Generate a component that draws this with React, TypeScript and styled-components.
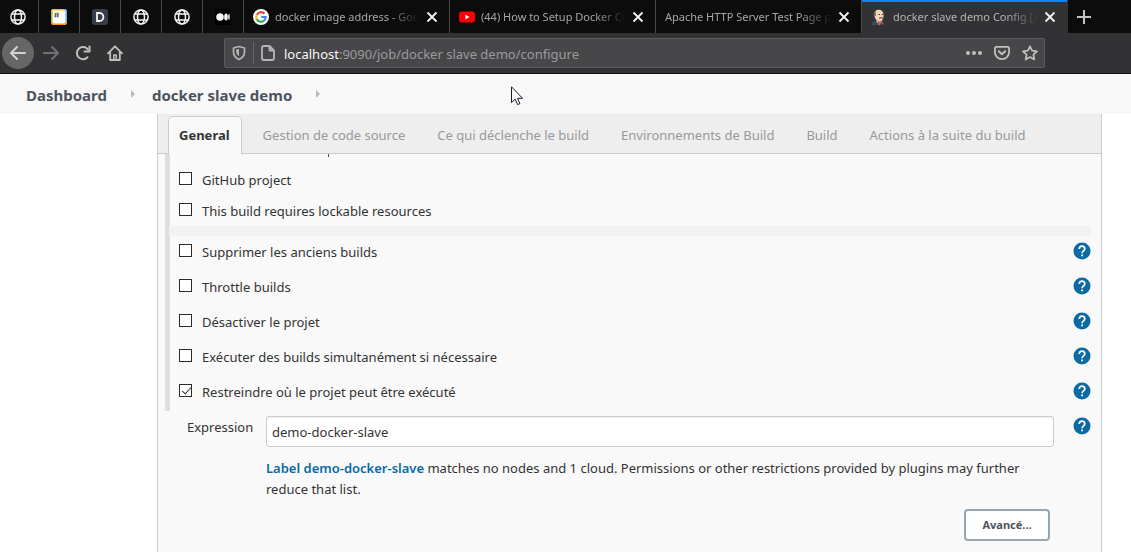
import React from "react";
import styled, { createGlobalStyle, css } from "styled-components";

const GlobalStyle = createGlobalStyle`
  *, *::before, *::after { box-sizing: border-box; }
  body { margin: 0; background: #fff; color: #333; font: 13px/20px "Noto Sans", sans-serif; }
  button, input { font: inherit; color: inherit; }
  button { padding: 0; border: 0; background: none; }
  a { text-decoration: none; }
`;

const Page = styled.div`
  display: flex;
  flex-direction: column;
  min-height: 100vh;
`;

/* ---------- browser chrome ---------- */

const TabStrip = styled.div`
  display: flex;
  flex: none;
  height: 33px;
  margin-left: -2px;
  background: #0c0c0d;
`;

const tabBase = css`
  display: flex;
  align-items: center;
  border-right: 1px solid #4a4a4b;
`;

const PinnedTab = styled.button`
  ${tabBase}
  flex: none;
  justify-content: center;
  width: 41px;
`;

const BrowserTab = styled.div<{ $active?: boolean }>`
  ${tabBase}
  flex: 0 1 206px;
  min-width: 0;
  gap: 6px;
  padding: 0 11px 0 9px;
  ${(p) =>
    p.$active &&
    css`
      border-right-color: #323234;
      background: #323234;
      box-shadow: inset 0 2px #0a84ff;
    `}
`;

const TabTitle = styled.span<{ $active?: boolean }>`
  flex: 1;
  min-width: 0;
  overflow: hidden;
  white-space: nowrap;
  font-size: 11px;
  color: ${(p) => (p.$active ? "#b4b4b6" : "#a6a6a7")};
  mask-image: linear-gradient(to left, transparent, #000 32px);
`;

const TabClose = styled.button`
  display: flex;
  flex: none;
  color: #f4f4f5;
`;

const NewTab = styled.button`
  display: flex;
  align-items: center;
  padding: 0 8px;
  color: #c4c4c5;
`;

const Toolbar = styled.div`
  display: flex;
  flex: none;
  align-items: center;
  gap: 16px;
  height: 41px;
  padding: 0 86px 1px 2px;
  background: #323234;
  border-bottom: 1px solid #0c0c0d;
`;

const NavButton = styled.button<{ $dim?: boolean }>`
  display: flex;
  flex: none;
  color: ${(p) => (p.$dim ? "#707072" : "#c0c0c1")};
`;

const BackButton = styled(NavButton)`
  align-items: center;
  justify-content: center;
  width: 32px;
  height: 32px;
  margin-right: -7px;
  border-radius: 50%;
  background: #666667;
  color: #d4d4d5;
`;

const NavButtons = styled.div`
  display: flex;
  flex: none;
  align-items: center;
  gap: 16px;
  width: 206px;
`;

const AddressBar = styled.div`
  display: flex;
  flex: 1;
  align-items: center;
  min-width: 0;
  height: 30px;
  padding: 0 6px 0 7px;
  border: 1px solid #5b5b5d;
  border-radius: 2px;
  background: #474749;
  color: #b4b4b6;
`;

const Divider = styled.span`
  width: 1px;
  height: 22px;
  margin: 0 7px;
  background: #66666a;
`;

const Url = styled.span`
  flex: 1;
  min-width: 0;
  margin: 2px 0 0 9px;
  overflow: hidden;
  white-space: nowrap;
  color: #9b9b9d;
`;

const Host = styled.span`
  color: #f9f9fa;
`;

const AddressActions = styled.div`
  display: flex;
  gap: 12px;
`;

/* ---------- page ---------- */

const Breadcrumbs = styled.nav`
  display: flex;
  flex: none;
  align-items: center;
  height: 40px;
  padding: 2px 26px 0;
  background: #f8f8f8;
`;

const Crumb = styled.a`
  color: #4d545d;
  font-size: 15px;
  font-weight: 700;
`;

const CrumbArrow = styled.span`
  width: 0;
  height: 0;
  margin: 0 17px 3px 24px;
  border: 4px solid transparent;
  border-right: 0;
  border-left-color: #b8b8b8;
`;

const Panel = styled.main`
  flex: 1;
  margin: 0 29px 0 157px;
  border: solid #ccc;
  border-width: 0 1px;
  background: #f9f9f9;
`;

const ConfigTabs = styled.div`
  display: flex;
  align-items: flex-end;
  gap: 32px;
  height: 40px;
  padding-left: 10px;
  border-bottom: 1px solid #ccc;
  background: #eee;
`;

const ConfigTab = styled.button<{ $active?: boolean }>`
  height: 37px;
  white-space: nowrap;
  color: #999;
  ${(p) =>
    p.$active &&
    css`
      height: 38px;
      margin: 0 -11px -1px 0;
      padding: 0 11px 2px 10px;
      border: 1px solid #ccc;
      border-bottom: 0;
      border-radius: 5px 5px 0 0;
      background: #f9f9f9;
      color: #333;
      font-weight: 700;
    `}
`;

const Options = styled.div`
  margin-left: 7px;
  border-left: 5px solid #dfdfdf;
`;

const ScrolledEdge = styled.div`
  height: 10px;
  padding-left: 158px;

  &::before {
    content: "";
    display: block;
    width: 1px;
    height: 3px;
    background: #6b3a66;
  }
`;

const OptionRow = styled.div<{ $compact?: boolean }>`
  display: flex;
  align-items: flex-start;
  justify-content: space-between;
  height: ${(p) => (p.$compact ? 31 : 35)}px;
  padding: 6px 10px 0 9px;
`;

const OptionLabel = styled.label`
  display: flex;
  gap: 10px;
`;

const Checkbox = styled.input`
  position: relative;
  flex: none;
  width: 13px;
  height: 13px;
  margin: 2px 0 0;
  appearance: none;
  border: 1px solid #2b2b2b;
  background: #fff;

  &:checked::after {
    content: "";
    position: absolute;
    top: 0;
    left: 4px;
    width: 5px;
    height: 9px;
    border: solid #333;
    border-width: 0 1px 1px 0;
    transform: rotate(42deg);
  }
`;

const Separator = styled.div`
  height: 10px;
  margin: 0 10px 0 -1px;
  background: #f2f2f2;
`;

const HelpButton = styled.button`
  display: flex;
  flex: none;
`;

const ExpressionRow = styled.div`
  display: grid;
  grid-template-columns: 79px 1fr 18px;
  align-items: start;
  padding: 6px 10px 12px 29px;
`;

const FieldLabel = styled.label``;

const FieldBody = styled.div`
  display: flex;
  flex-direction: column;
  margin: -1px 19px 0 0;
`;

const TextInput = styled.input`
  width: 100%;
  height: 31px;
  padding: 0 5px;
  border: 1px solid #ccc;
  border-radius: 3px;
  background: #fff;
  box-shadow: inset 0 1px 1px #eee;
`;

const Description = styled.p`
  margin: 11px 0 9px;
  line-height: 21px;
`;

const LabelLink = styled.a`
  color: #0b6aa2;
  font-weight: 600;
`;

const AdvancedButton = styled.button`
  align-self: flex-end;
  width: 86px;
  height: 32px;
  margin-right: 4px;
  border: 2px solid #98a6b3;
  border-radius: 4px;
  background: #fff;
  color: #4d545d;
  font-size: 11px;
  font-weight: 700;
`;

const Pointer = styled.svg`
  position: absolute;
  top: 86px;
  left: 511px;
`;

/* ---------- drawings ---------- */

const GlobeIcon = () => (
  <svg width="16" height="16" viewBox="0 0 16 16" fill="none" stroke="#f4f4f5" strokeWidth="1.5">
    <circle cx="8" cy="8" r="7.1" />
    <ellipse cx="8" cy="8" rx="3.5" ry="7.1" />
    <path d="M1.8 5h12.4M1.8 11h12.4" />
  </svg>
);

const HashIcon = () => (
  <svg width="16" height="16" viewBox="0 0 16 16" fill="none">
    <rect width="16" height="16" rx="3" fill="#fff" />
    <path d="M.8 13V3" stroke="#9bc53d" strokeWidth="1.600" />
    <path d="M.8 3Q.8.8 3 .8H13" stroke="#f8c600" strokeWidth="1.600" />
    <path d="M13 .8q2.200 0 2.200 2.200v10" stroke="#66b2f5" strokeWidth="1.600" />
    <path d="M15.200 13q0 2.200-2.200 2.200H3Q.8 15.200.8 13" stroke="#ff8a1c" strokeWidth="1.600" />
    <path d="M5 3.5 4.3 8.5M7.2 3.5 6.5 8.5M3.4 5h4.8M3.1 7h4.8" stroke="#444" strokeWidth=".8" />
  </svg>
);

const DIcon = () => (
  <svg width="16" height="16" viewBox="0 0 16 16">
    <rect width="16" height="16" rx="3" fill="#363d49" />
    <path d="M5 4h2.4a4 4 0 0 1 0 8H5z" fill="none" stroke="#f5f5f5" strokeWidth="1.8" />
  </svg>
);

const DotsIcon = () => (
  <svg width="16" height="16" viewBox="0 0 16 16" fill="#f4f4f5">
    <rect width="16" height="16" rx="1" fill="#000" />
    <circle cx="5" cy="8" r="3.8" />
    <ellipse cx="11" cy="8" rx="1.8" ry="3.6" />
    <ellipse cx="14" cy="8" rx=".8" ry="3.2" />
  </svg>
);

const GoogleIcon = () => (
  <svg width="16" height="16" viewBox="0 0 16 16" fill="none" strokeWidth="2.2">
    <circle cx="8" cy="8" r="8" fill="#fff" />
    <path d="M11.400 4.600A4.800 4.800 0 0 0 3.800 5.700" stroke="#ea4335" />
    <path d="M3.800 5.700a4.800 4.800 0 0 0 0 4.600" stroke="#fbbc05" />
    <path d="M3.800 10.300a4.800 4.800 0 0 0 7.300 1.300" stroke="#34a853" />
    <path d="M11.100 11.600A4.800 4.800 0 0 0 12.700 8H8.200" stroke="#4285f4" />
  </svg>
);

const YoutubeIcon = () => (
  <svg width="16" height="16" viewBox="0 0 16 16">
    <rect y="2.5" width="16" height="11" rx="3" fill="#f00" />
    <path d="M6.4 5.8 10.6 8l-4.2 2.3z" fill="#fff" />
  </svg>
);

const ButlerIcon = () => (
  <svg width="16" height="16" viewBox="0 0 16 16">
    <path d="M1 16q0-4 4-4h5q3 .5 3 4z" fill="#335061" />
    <path d="M5 11.5 8 16l3-4.5z" fill="#fff" />
    <path d="M3 6q0-5.600 5-5.600 4.800.400 4.800 6 0 6-4.200 6.300Q4 12.400 3 6z" fill="#f0d6b7" stroke="#3a2c28" strokeWidth=".5" />
    <path d="M3 8.500Q1.500 4 4.500 1.500L5 6.500z" fill="#6d6b6d" />
    <path d="M7.500 5.500h1.500M10.800 5.500h1.200M8 9.300q2-1 4 0" stroke="#2c2422" strokeWidth=".9" fill="none" />
    <path d="m7 12.600 2.300 1.200L12 12.600v2.900l-2.700-1L7 15.500z" fill="#d33833" />
  </svg>
);

const CloseIcon = () => (
  <svg width="12" height="12" viewBox="0 0 12 12" stroke="currentColor" strokeWidth="1.8">
    <path d="m1.500 1.500 9 9m0-9-9 9" />
  </svg>
);

const PlusIcon = () => (
  <svg width="16" height="16" viewBox="0 0 16 16" stroke="currentColor" strokeWidth="2">
    <path d="M8 1v14M1 8h14" />
  </svg>
);

const ArrowIcon = ({ flip }: { flip?: boolean }) => (
  <svg width="16" height="16" viewBox="0 0 16 16" fill="none" stroke="currentColor" strokeWidth="2" strokeLinecap="round" strokeLinejoin="round">
    <path d={flip ? "M1 8h14M9 2l6 6-6 6" : "M15 8H1M7 2 1 8l6 6"} />
  </svg>
);

const ReloadIcon = () => (
  <svg width="16" height="16" viewBox="0 0 16 16" fill="none" stroke="currentColor" strokeWidth="2">
    <path d="M12.500 12.200A6.100 6.100 0 1 1 12.800 4.300" strokeLinecap="round" />
    <path d="M14.500 1.500V6.500H9.500" strokeLinecap="round" strokeLinejoin="round" />
  </svg>
);

const HomeIcon = () => (
  <svg width="16" height="16" viewBox="0 0 16 16" fill="none" stroke="currentColor" strokeWidth="1.800" strokeLinejoin="round" strokeLinecap="round">
    <path d="m1 8.300 7-7 7 7M3.200 7.500V15h9.600V7.500" />
    <path d="M6.800 14.500V10h2.400v4.500" strokeWidth="1.500" />
  </svg>
);

const ShieldIcon = () => (
  <svg width="14" height="16" viewBox="0 0 14 16" fill="none" stroke="currentColor" strokeWidth="1.700">
    <path d="M7 1.500 12.500 3v4q0 4.800-5.500 7.500Q1.500 11.800 1.500 7V3z" strokeLinejoin="round" />
    <path d="M7 4v7.500Q4.200 9.500 4.200 7V4.600z" fill="currentColor" stroke="none" />
  </svg>
);

const PageIcon = () => (
  <svg width="14" height="16" viewBox="0 0 14 16" fill="none" stroke="currentColor" strokeWidth="1.800" strokeLinejoin="round">
    <path d="M8.500 1H3Q1 1 1 3v10q0 2 2 2h8q2 0 2-2V5.500zV5.500H13" />
  </svg>
);

const MoreIcon = () => (
  <svg width="16" height="16" viewBox="0 0 16 16" fill="currentColor">
    <circle cx="2" cy="8" r="2" />
    <circle cx="8" cy="8" r="2" />
    <circle cx="14" cy="8" r="2" />
  </svg>
);

const PocketIcon = () => (
  <svg width="16" height="16" viewBox="0 0 16 16" fill="none" stroke="currentColor" strokeWidth="1.800" strokeLinecap="round" strokeLinejoin="round">
    <path d="M2.500 1.900h11q1.600 0 1.600 1.600V7a7.100 7.100 0 0 1-14.200 0V3.500q0-1.600 1.600-1.600z" />
    <path d="m4.800 6.300 3.200 3 3.200-3" strokeWidth="2" />
  </svg>
);

const StarIcon = () => (
  <svg width="16" height="16" viewBox="0 0 16 16" fill="none" stroke="currentColor" strokeWidth="1.700" strokeLinejoin="round">
    <path d="m8 1.300 2.100 4.400 4.900.6-3.600 3.300.9 4.900L8 12.100l-4.300 2.400.9-4.900L1 6.300l4.900-.6z" />
  </svg>
);

const HelpIcon = () => (
  <svg width="18" height="18" viewBox="0 0 18 18" fill="none">
    <circle cx="9" cy="9" r="8.500" fill="#0b6aa2" />
    <path d="M6.200 7q0-2.800 2.800-2.800T11.800 7c0 1.900-2.700 2-2.700 4.200" stroke="#fff" strokeWidth="1.700" />
    <path d="M8.200 12.500h1.800v1.800H8.200z" fill="#fff" />
  </svg>
);

/* ---------- content ---------- */

const pinned = [
  { name: "Site", icon: <GlobeIcon /> },
  { name: "Notes", icon: <HashIcon /> },
  { name: "D", icon: <DIcon /> },
  { name: "Site", icon: <GlobeIcon /> },
  { name: "Site", icon: <GlobeIcon /> },
  { name: "Medium", icon: <DotsIcon /> },
];

const browserTabs = [
  { title: "docker image address - Google", icon: <GoogleIcon /> },
  { title: "(44) How to Setup Docker Containers", icon: <YoutubeIcon /> },
  { title: "Apache HTTP Server Test Page powered", icon: null },
  { title: "docker slave demo Config [Jenkins]", icon: <ButlerIcon />, active: true },
];

const configTabs = [
  "General",
  "Gestion de code source",
  "Ce qui déclenche le build",
  "Environnements de Build",
  "Build",
  "Actions à la suite du build",
];

const projectOptions = ["GitHub project", "This build requires lockable resources"];

const buildOptions = [
  { text: "Supprimer les anciens builds" },
  { text: "Throttle builds" },
  { text: "Désactiver le projet" },
  { text: "Exécuter des builds simultanément si nécessaire" },
  { text: "Restreindre où le projet peut être exécuté", checked: true },
];

const Help = ({ topic }: { topic: string }) => (
  <HelpButton type="button" aria-label={`Aide : ${topic}`}>
    <HelpIcon />
  </HelpButton>
);

export default function App() {
  return (
    <Page>
      <GlobalStyle />
      <TabStrip>
        {pinned.map((tab, i) => (
          <PinnedTab key={i} aria-label={tab.name}>
            {tab.icon}
          </PinnedTab>
        ))}
        {browserTabs.map((tab) => (
          <BrowserTab key={tab.title} $active={tab.active}>
            {tab.icon}
            <TabTitle $active={tab.active}>{tab.title}</TabTitle>
            <TabClose aria-label="Fermer">
              <CloseIcon />
            </TabClose>
          </BrowserTab>
        ))}
        <NewTab aria-label="Nouvel onglet">
          <PlusIcon />
        </NewTab>
      </TabStrip>

      <Toolbar>
        <NavButtons>
          <BackButton aria-label="Précédent">
            <ArrowIcon />
          </BackButton>
          <NavButton $dim aria-label="Suivant">
            <ArrowIcon flip />
          </NavButton>
          <NavButton aria-label="Actualiser">
            <ReloadIcon />
          </NavButton>
          <NavButton aria-label="Accueil">
            <HomeIcon />
          </NavButton>
        </NavButtons>
        <AddressBar>
          <ShieldIcon />
          <Divider />
          <PageIcon />
          <Url>
            <Host>localhost</Host>:9090/job/docker slave demo/configure
          </Url>
          <AddressActions>
            <NavButton aria-label="Plus">
              <MoreIcon />
            </NavButton>
            <NavButton aria-label="Pocket">
              <PocketIcon />
            </NavButton>
            <NavButton aria-label="Marque-page">
              <StarIcon />
            </NavButton>
          </AddressActions>
        </AddressBar>
      </Toolbar>

      <Breadcrumbs>
        <Crumb href="#dashboard">Dashboard</Crumb>
        <CrumbArrow />
        <Crumb href="#job">docker slave demo</Crumb>
        <CrumbArrow />
      </Breadcrumbs>

      <Panel>
        <ConfigTabs>
          {configTabs.map((name, i) => (
            <ConfigTab key={name} type="button" $active={i === 0}>
              {name}
            </ConfigTab>
          ))}
        </ConfigTabs>
        <Options>
          <ScrolledEdge />
          {projectOptions.map((text) => (
            <OptionRow key={text} $compact>
              <OptionLabel>
                <Checkbox type="checkbox" />
                {text}
              </OptionLabel>
            </OptionRow>
          ))}
          <Separator />
          {buildOptions.map(({ text, checked }) => (
            <OptionRow key={text}>
              <OptionLabel>
                <Checkbox type="checkbox" defaultChecked={checked} />
                {text}
              </OptionLabel>
              <Help topic={text} />
            </OptionRow>
          ))}
        </Options>
        <ExpressionRow>
          <FieldLabel htmlFor="expression">Expression</FieldLabel>
          <FieldBody>
            <TextInput id="expression" type="text" defaultValue="demo-docker-slave" />
            <Description>
              <LabelLink href="#label">Label demo-docker-slave</LabelLink> matches no nodes and 1
              cloud. Permissions or other restrictions provided by plugins may further reduce that
              list.
            </Description>
            <AdvancedButton type="button">Avancé...</AdvancedButton>
          </FieldBody>
          <Help topic="Expression" />
        </ExpressionRow>
      </Panel>

      <Pointer width="13" height="20" viewBox="0 0 13 20" aria-hidden="true">
        <path
          d="M.5.800V16.500l3.600-3.400 2.500 5.500 2.300-1-2.400-5.300h5z"
          fill="#fff"
          stroke="#1a1a28"
        />
      </Pointer>
    </Page>
  );
}
